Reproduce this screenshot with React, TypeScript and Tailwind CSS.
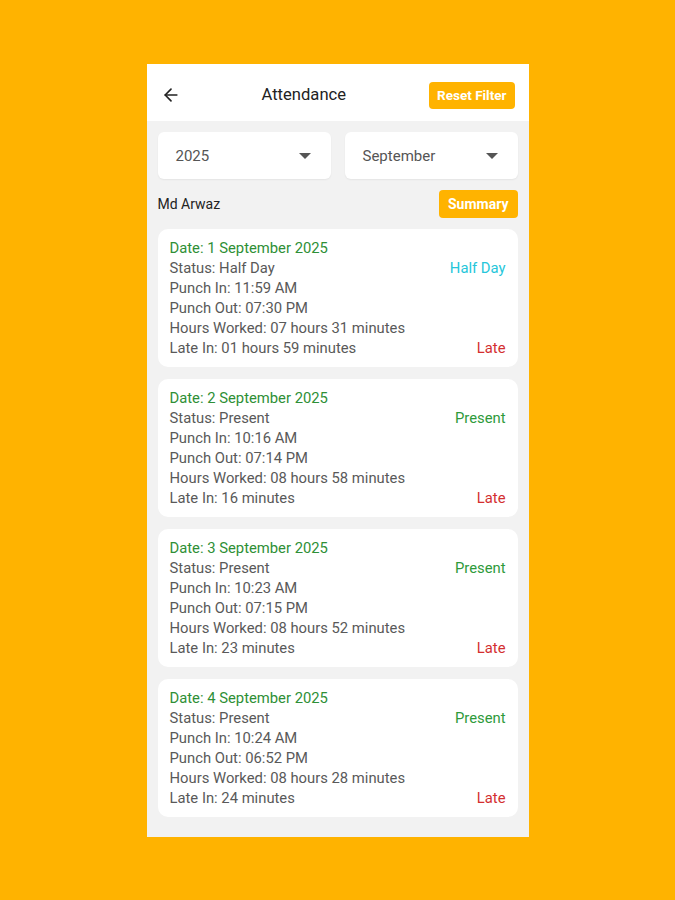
import { ArrowLeft } from 'lucide-react';

type Record = {
  date: string;
  status: string;
  punchIn: string;
  punchOut: string;
  hours: string;
  late: string;
};

const records: Record[] = [
  { date: '1 September 2025', status: 'Half Day', punchIn: '11:59 AM', punchOut: '07:30 PM', hours: '07 hours 31 minutes', late: '01 hours 59 minutes' },
  { date: '2 September 2025', status: 'Present', punchIn: '10:16 AM', punchOut: '07:14 PM', hours: '08 hours 58 minutes', late: '16 minutes' },
  { date: '3 September 2025', status: 'Present', punchIn: '10:23 AM', punchOut: '07:15 PM', hours: '08 hours 52 minutes', late: '23 minutes' },
  { date: '4 September 2025', status: 'Present', punchIn: '10:24 AM', punchOut: '06:52 PM', hours: '08 hours 28 minutes', late: '24 minutes' },
];

function Dropdown({ value }: { value: string }) {
  return (
    <div className="flex-1 h-[47px] bg-white rounded-md shadow-[0_1px_2px_rgba(0,0,0,0.06)] flex items-center justify-between pl-[18px] pr-[20px]">
      <span className="text-[15px] text-[#555] mt-[2px]">{value}</span>
      <span className="w-0 h-0 border-l-[6px] border-r-[6px] border-t-[6px] border-l-transparent border-r-transparent border-t-[#555]" />
    </div>
  );
}

function Card({ r }: { r: Record }) {
  const statusColor = r.status === 'Half Day' ? 'text-[#26c6da]' : 'text-[#2e9a3a]';
  return (
    <div className="bg-white rounded-[10px] px-3 pt-[9px] pb-[9px] text-[14.8px] leading-[20px] text-[#595959]">
      <div className="text-[#2e8f36]">Date: {r.date}</div>
      <div className="flex justify-between">
        <span>Status: {r.status}</span>
        <span className={statusColor}>{r.status}</span>
      </div>
      <div>Punch In: {r.punchIn}</div>
      <div>Punch Out: {r.punchOut}</div>
      <div>Hours Worked: {r.hours}</div>
      <div className="flex justify-between">
        <span>Late In: {r.late}</span>
        <span className="text-[#d32f2f]">Late</span>
      </div>
    </div>
  );
}

export default function App() {
  return (
    <div className="min-h-[900px] bg-[#ffb300] flex justify-center pt-[64px]" style={{ fontFamily: 'Roboto, "Noto Sans", sans-serif' }}>
      <div className="w-[382px] h-[773px] bg-[#f2f2f2] flex flex-col overflow-hidden">
        <div className="h-[57px] bg-white flex items-center pl-[14px] pr-[14px] pt-[5px]">
          <ArrowLeft size={20} strokeWidth={2} className="text-[#222]" />
          <div className="ml-[81px] text-[16.6px] text-[#222]">Attendance</div>
          <div className="flex-1" />
          <button className="h-[27px] px-2 rounded bg-[#ffb300] text-white text-[13.5px] font-bold">Reset Filter</button>
        </div>
        <div className="px-[11px] pt-[11px] flex flex-col">
          <div className="flex gap-[14px]">
            <Dropdown value="2025" />
            <Dropdown value="September" />
          </div>
          <div className="flex items-center justify-between mt-[11px]">
            <span className="text-[14px] text-[#222] mt-[1px]">Md Arwaz</span>
            <button className="h-[28px] px-[9px] rounded bg-[#ffb300] text-white text-[14px] font-bold">Summary</button>
          </div>
          <div className="flex flex-col gap-[12px] mt-[11px]">
            {records.map((r) => (
              <Card key={r.date} r={r} />
            ))}
          </div>
        </div>
      </div>
    </div>
  );
}
